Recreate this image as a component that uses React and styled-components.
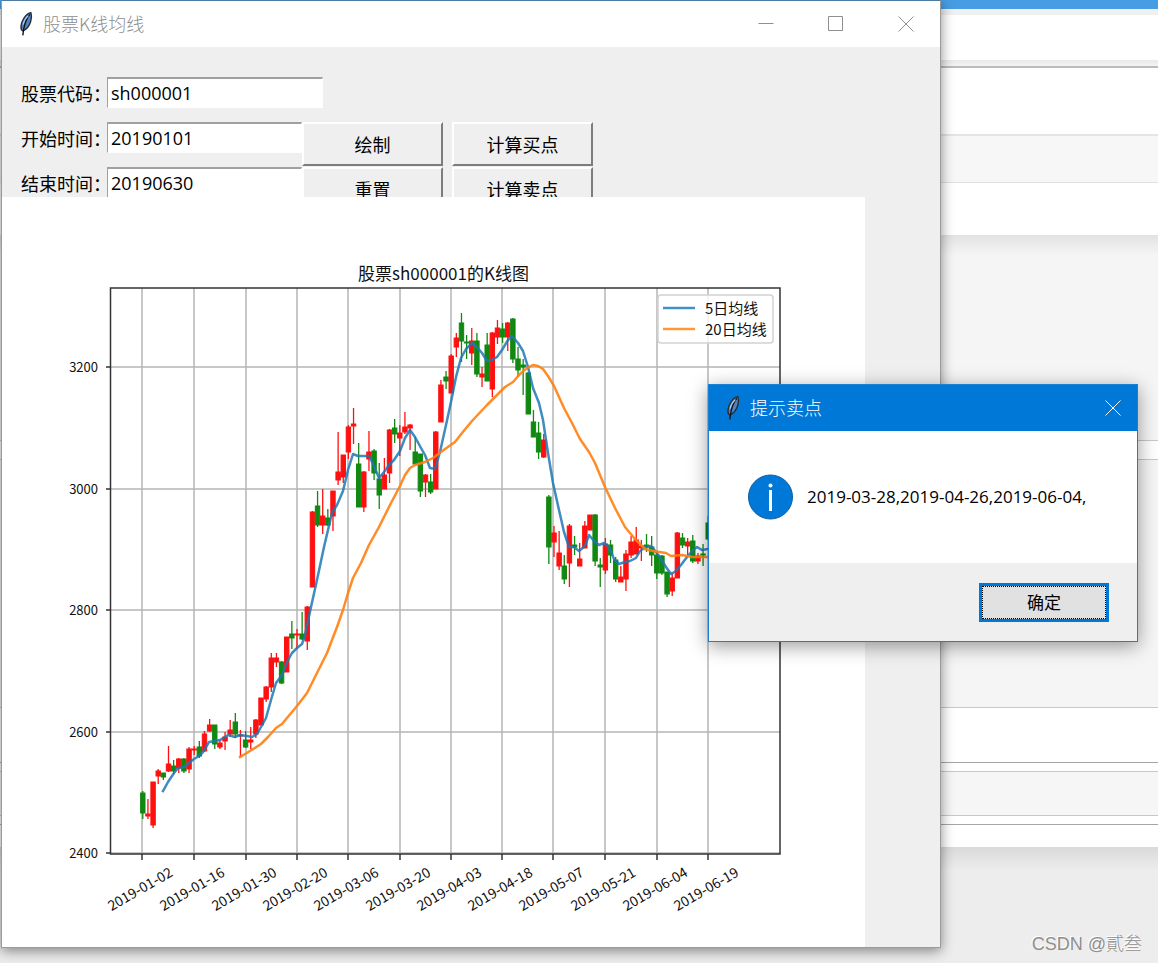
import React from "react";
import styled, { createGlobalStyle } from "styled-components";

const uiFont = `"Open Sans", "Noto Sans CJK SC", sans-serif`;
const cjkFont = `"Noto Sans CJK SC", sans-serif`;

const GlobalStyle = createGlobalStyle`
  *, *::before, *::after { box-sizing: border-box; }
  body { margin: 0; font-family: ${uiFont}; color: #000; background: #ededed; }
  button, input { font: inherit; color: inherit; }
`;

/* ---------- desktop ---------- */

const Desktop = styled.main`
  position: relative;
  display: grid;
  grid-template-columns: minmax(0, 1fr);
  min-height: 100vh;
  overflow: hidden;
`;

const Backdrop = styled.div`
  grid-area: 1 / 1;
  display: flex;
  flex-direction: column;
`;

const Band = styled.div`
  flex: ${(p) => (p.$fill ? "1 0 0" : "none")};
  height: ${(p) => p.$h}px;
  background: ${(p) => p.$bg};
`;

const Watermark = styled.p`
  position: absolute;
  right: 16px;
  bottom: 5px;
  margin: 0;
  font-family: "Liberation Sans", "Noto Sans CJK SC", sans-serif;
  font-weight: 300;
  font-size: 18px;
  line-height: 28px;
  color: #8e8e8e;
  text-shadow: -1px -1px 0 #fff;
`;

/* ---------- window chrome ---------- */

const MainWindow = styled.section`
  grid-area: 1 / 1;
  align-self: start;
  margin: 0 217px 15px 1px;
  border: 1px solid #9b9b9b;
  border-top-color: #4b7aa5;
  background: #efefef;
  box-shadow: 0 3px 12px rgba(0, 0, 0, 0.45);
`;

const TitleBar = styled.header`
  display: flex;
  align-items: center;
  height: 46px;
  padding: 0 ${(p) => (p.$active ? 12 : 22)}px 0 16px;
  gap: 9px;
  background: ${(p) => (p.$active ? "#0078d7" : "#fff")};
  color: ${(p) => (p.$active ? "#fff" : "#8f8f8f")};
`;

const WindowTitle = styled.h1`
  flex: 1;
  margin: 0;
  padding-bottom: 3px;
  font-family: ${cjkFont};
  font-weight: 300;
  font-size: 18px;
  line-height: 24px;
`;

const CaptionButtons = styled.div`
  display: flex;
  gap: 46px;
`;

const CaptionButton = styled.button`
  display: grid;
  place-items: center;
  width: 24px;
  height: 24px;
  padding: 0;
  border: 0;
  background: none;
`;

/* ---------- query form ---------- */

const QueryForm = styled.form`
  height: 150px;
  padding: 30px 0 0 19px;
  overflow: hidden;
`;

const FormRow = styled.div`
  display: flex;
  align-items: flex-start;
  height: 45px;
`;

const FieldLabel = styled.label`
  width: 86px;
  font-family: ${cjkFont};
  font-size: 18px;
  line-height: 32px;
  white-space: nowrap;
`;

const Field = styled.input`
  width: ${(p) => (p.$wide ? 216 : 195)}px;
  height: 31px;
  padding: 0 3px;
  border: 1px solid #fff;
  border-top: 2px solid #a0a0a0;
  border-left: 1px solid #a0a0a0;
  border-radius: 0;
  background: #fff;
  font-size: 18px;
  line-height: 28px;
  outline: none;
`;

const ToolButton = styled.button`
  width: 141px;
  height: 44px;
  margin-right: 9px;
  padding: 0 0 1px;
  border: 2px solid #fff;
  border-right: 2px solid #7d7d7d;
  border-bottom: 2px solid #7d7d7d;
  background: #efefef;
  font-family: ${cjkFont};
  font-size: 18px;
  line-height: 24px;
`;

const Figure = styled.figure`
  margin: 0 75px 0 0;
  background: #fff;

  svg { display: block; width: 100%; height: auto; }
`;

/* ---------- message dialog ---------- */

const Dialog = styled.section`
  position: absolute;
  top: 384px;
  right: 20px;
  width: 430px;
  border: 1px solid #1b80d2;
  background: #efefef;
  box-shadow: 0 4px 18px rgba(0, 0, 0, 0.4);
`;

const Message = styled.div`
  display: flex;
  align-items: center;
  gap: 13px;
  height: 132px;
  padding: 0 39px;
  background: #fff;
  font-size: 17px;
  line-height: 24px;

  p { margin: 0; white-space: nowrap; }
`;

const DialogFooter = styled.footer`
  display: flex;
  justify-content: flex-end;
  align-items: center;
  height: 78px;
  padding: 0 28px;
`;

const OkButton = styled.button`
  width: 130px;
  height: 39px;
  padding: 0;
  border: 3px solid #0078d7;
  background: #e1e1e1;
  font-family: ${cjkFont};
  font-size: 17px;
  line-height: 24px;
  outline: 1px dotted #000;
  outline-offset: -4px;
`;

/* ---------- icons ---------- */

const Feather = () => (
  <svg width="16" height="26" viewBox="0 0 16 26" aria-hidden="true">
    <path d="M12.800 1.600C9.600 2.200 6 6 4 11c-1.200 3.200-1.400 5.800-.6 7.800l1.600 1.200c3.400-1.600 6.400-5 7.600-9.200 1-3.600 1.200-6.600.2-9.200z" fill="#4f83c4" stroke="#2b2b2b" strokeWidth="1.300" />
    <path d="M11.800 3.400C8.400 7.200 6 12.600 4.800 24.400" fill="none" stroke="#111" strokeWidth="1.400" />
    <path d="M10.400 4.600C7.800 6.800 6 10 5 13.600" fill="none" stroke="#a9cdf3" strokeWidth="1.200" />
  </svg>
);

const CaptionIcon = ({ d }) => (
  <svg width="16" height="16" viewBox="0 0 16 16" aria-hidden="true">
    <path d={d} fill="none" stroke="currentColor" strokeWidth="1" />
  </svg>
);

const MINIMIZE = "M0.500 7.500H15.500";
const MAXIMIZE = "M0.500 0.500H14.500V14.500H0.500Z";
const CLOSE = "M0.500 0.500L15.500 15.500M15.500 0.500L0.500 15.500";

const InfoIcon = () => (
  <svg width="46" height="46" viewBox="0 0 46 46" aria-hidden="true">
    <circle cx="22.500" cy="23" r="22" fill="#0078d7" stroke="#0d5fa5" strokeWidth="1" />
    <circle cx="22.500" cy="11.500" r="2" fill="#fff" />
    <path d="M22.500 16V37" stroke="#fff" strokeWidth="3" />
  </svg>
);

/* ---------- chart ---------- */

// Each candle: direction, body top, body bottom, wick top, wick bottom.
const CANDLES = [
  ["g", 793, 813, 791, 819], ["r", 814, 816, 799, 819], ["r", 782, 825, 782, 828],
  ["r", 771, 776, 769, 784], ["g", 773, 777, 773, 780], ["r", 764, 771, 746, 772],
  ["g", 766, 771, 760, 774], ["r", 759, 768, 758, 773], ["g", 759, 771, 758, 773],
  ["r", 749, 769, 747, 773], ["r", 749, 750, 746, 755], ["g", 747, 756, 741, 758],
  ["r", 734, 751, 731, 752], ["r", 725, 731, 719, 732], ["g", 725, 744, 725, 749],
  ["r", 743, 747, 740, 749], ["r", 737, 741, 732, 750], ["r", 730, 734, 720, 737],
  ["g", 722, 734, 713, 738], ["r", 735, 736, 730, 757], ["g", 740, 747, 731, 748],
  ["r", 740, 742, 727, 749], ["r", 720, 734, 719, 738], ["r", 698, 725, 698, 725],
  ["r", 687, 699, 686, 702], ["r", 658, 687, 653, 692], ["r", 658, 662, 653, 667],
  ["g", 662, 683, 661, 684], ["r", 637, 672, 637, 672], ["g", 634, 638, 621, 649],
  ["r", 634, 635, 629, 649], ["g", 634, 639, 612, 640], ["r", 607, 641, 606, 650],
  ["r", 512, 587, 511, 587], ["g", 506, 525, 491, 527], ["r", 516, 525, 489, 534],
  ["g", 518, 525, 509, 526], ["r", 491, 516, 491, 531], ["r", 472, 480, 432, 485],
  ["r", 455, 477, 455, 483], ["r", 427, 452, 425, 459], ["r", 424, 426, 408, 444],
  ["g", 464, 507, 443, 507], ["r", 472, 507, 471, 512], ["r", 452, 459, 431, 471],
  ["g", 451, 473, 449, 480], ["g", 479, 495, 463, 509], ["r", 475, 489, 458, 489],
  ["r", 430, 473, 429, 483], ["g", 428, 434, 419, 443], ["r", 433, 438, 425, 456],
  ["r", 427, 432, 412, 434], ["r", 425, 428, 424, 450], ["g", 452, 464, 437, 464],
  ["g", 454, 491, 454, 497], ["r", 475, 482, 474, 497], ["g", 482, 492, 474, 494],
  ["r", 432, 489, 431, 489], ["r", 385, 422, 380, 422], ["g", 377, 381, 371, 389],
  ["r", 356, 393, 354, 393], ["r", 338, 347, 333, 357], ["g", 323, 341, 313, 362],
  ["g", 342, 343, 335, 359], ["r", 341, 353, 328, 365], ["g", 341, 374, 333, 377],
  ["r", 374, 377, 367, 387], ["g", 345, 381, 333, 381], ["r", 333, 389, 332, 397],
  ["r", 328, 337, 320, 344], ["g", 329, 337, 323, 343], ["r", 323, 337, 322, 351],
  ["g", 319, 359, 318, 363], ["g", 359, 370, 347, 377], ["g", 365, 367, 359, 395],
  ["g", 373, 414, 372, 414], ["g", 422, 437, 410, 437], ["g", 433, 452, 422, 459],
  ["r", 440, 457, 434, 458], ["g", 497, 547, 495, 564], ["r", 533, 542, 526, 557],
  ["r", 553, 566, 531, 570], ["g", 566, 579, 555, 584], ["r", 526, 563, 524, 587],
  ["g", 545, 547, 536, 555], ["r", 559, 566, 543, 566], ["r", 526, 548, 521, 548],
  ["r", 515, 530, 515, 530], ["g", 515, 561, 514, 566], ["g", 565, 567, 558, 587],
  ["r", 544, 570, 538, 574], ["g", 545, 555, 540, 563], ["g", 560, 579, 557, 582],
  ["r", 577, 582, 566, 582], ["r", 554, 579, 550, 591], ["r", 542, 555, 536, 558],
  ["r", 540, 554, 527, 554], ["r", 546, 548, 540, 561], ["g", 545, 547, 534, 552],
  ["g", 547, 555, 536, 566], ["g", 555, 573, 552, 579], ["g", 556, 573, 555, 575],
  ["g", 572, 594, 572, 597], ["r", 578, 591, 573, 596], ["r", 533, 578, 532, 578],
  ["g", 538, 545, 533, 548], ["r", 542, 546, 538, 555], ["g", 541, 561, 535, 563],
  ["r", 556, 561, 553, 564], ["g", 554, 555, 544, 566], ["g", 523, 539, 516, 540],
];

const MA5 =
  "163,791 168,782 174,773 178,768 184,767 189,763 194,759 199,756 203,752 209,742 215,741 220,740 228,735 235,737 240,735 247,736 252,737 257,734 261,727 266,718 271,700 276,683 282,675 287,662 292,653 297,648 302,644 305,635 311,607 317,580 324,547 332,513 337,505 343,491 348,470 353,454 358,456 364,456 369,456 374,466 379,478 384,472 389,465 394,460 400,451 405,438 410,430 415,437 421,448 425,455 430,468 435,469 440,452 446,425 451,402 456,377 461,358 466,349 472,343 477,347 482,353 487,361 492,360 497,357 502,350 508,340 512,336 518,343 523,351 528,367 533,388 539,403 543,420 548,453 553,483 559,510 564,532 569,547 574,547 579,551 585,546 589,535 594,541 599,545 604,543 609,547 614,559 619,564 625,562 630,561 636,558 640,551 646,547 651,546 656,552 661,559 666,567 671,574 676,571 681,565 687,557 693,550 697,547 702,550 708,549";

const MA20 =
  "240,757 250,751 261,744 268,737 276,728 282,724 287,718 297,706 307,693 317,673 327,653 337,627 343,610 348,593 353,578 361,563 369,545 379,527 390,505 400,486 405,475 410,468 415,465 425,462 433,458 445,449 455,442 462,433 472,421 487,405 505,387 513,382 520,374 527,368 533,365 538,366 543,369 548,376 554,386 564,408 572,423 580,439 589,452 595,463 605,487 615,508 625,527 635,539 645,549 653,551 666,553 671,556 682,555 687,556 692,557 708,557";

const Y_TICKS = [[3200, 367], [3000, 489], [2800, 610], [2600, 732], [2400, 853]];
const X_TICKS = [
  ["2019-01-02", 142], ["2019-01-16", 194], ["2019-01-30", 246], ["2019-02-20", 297],
  ["2019-03-06", 348], ["2019-03-20", 400], ["2019-04-03", 451], ["2019-04-18", 502],
  ["2019-05-07", 553], ["2019-05-21", 605], ["2019-06-04", 657], ["2019-06-19", 708],
];
const COLORS = { r: "#ff1010", g: "#118811" };

const Chart = () => (
  <svg viewBox="2 197 863 750" role="img" aria-label="股票sh000001的K线图" fontFamily='"Noto Sans CJK SC", sans-serif' fill="#111">
    <g stroke="#b4b4b4" strokeWidth="1.500">
      {Y_TICKS.map(([v, y]) => <line key={v} x1="111" x2="780" y1={y} y2={y} />)}
      {X_TICKS.map(([d, x]) => <line key={d} x1={x} x2={x} y1="288" y2="854" />)}
    </g>
    {CANDLES.map(([dir, top, bottom, high, low], i) => {
      const x = 142.8 + i * 5.14;
      return (
        <g key={i} fill={COLORS[dir]} stroke={COLORS[dir]}>
          <line x1={x} x2={x} y1={high} y2={low} strokeWidth="1.300" />
          <rect x={x - 2.2} y={top} width="4.400" height={bottom - top} strokeWidth="1" />
        </g>
      );
    })}
    <g fill="none" strokeWidth="2.500" strokeLinejoin="round" strokeLinecap="square">
      <polyline points={MA5} stroke="#1f77b4" strokeOpacity="0.850" />
      <polyline points={MA20} stroke="#ff7f0e" strokeOpacity="0.900" />
    </g>
    <g stroke="#333" strokeWidth="1.500" fill="none">
      <rect x="110.500" y="288" width="669.500" height="566" />
      {Y_TICKS.map(([v, y]) => <line key={v} x1="106" x2="110" y1={y} y2={y} />)}
      {X_TICKS.map(([d, x]) => <line key={d} x1={x} x2={x} y1="854" y2="860" />)}
    </g>
    <text x="443.500" y="280" textAnchor="middle" fontSize="17">股票sh000001的K线图</text>
    <g fontSize="13" textAnchor="end">
      {Y_TICKS.map(([v, y]) => <text key={v} x="98" y={y + 5}>{v}</text>)}
    </g>
    <g fontSize="14" textAnchor="middle">
      {X_TICKS.map(([d, x]) => (
        <text key={d} y="5" transform={`translate(${x - 2} 889) rotate(-30)`}>{d}</text>
      ))}
    </g>
    <rect x="658" y="295" width="115" height="48" rx="3" fill="#fff" fillOpacity="0.800" stroke="#d2d2d2" strokeWidth="1.500" />
    <g strokeWidth="2.500">
      <line x1="663" x2="695" y1="308" y2="308" stroke="#4390c4" />
      <line x1="663" x2="695" y1="329" y2="329" stroke="#ff9838" />
    </g>
    <g fontSize="15">
      <text x="705" y="314">5日均线</text>
      <text x="705" y="335">20日均线</text>
    </g>
  </svg>
);

/* ---------- page ---------- */

const BANDS = [
  [9, "#479de3"], [6, "#f0f0f0"], [45, "#fff"], [6, "linear-gradient(#e8e8e8, #f4f4f4)"],
  [2, "#bbb"], [66, "#fff"], [2, "#e4e4e4"], [46, "#f7f7f7"], [1, "#e0e0e0"], [52, "#fff"],
  [20, "linear-gradient(#e2e2e2, #f5f5f5)"], [185, "#f5f5f5"], [1, "#c8c8c8"], [18, "#fff"],
  [1, "#c8c8c8"], [247, "#f5f5f5"], [1, "#c8c8c8"], [54, "#fff"], [1, "#a6a6a6"], [8, "#fff"],
  [1, "#c8c8c8"], [43, "#f6f6f6"], [1, "#c8c8c8"], [8, "#fff"], [1, "#a6a6a6"], [22, "#fff"],
  [24, "linear-gradient(#dadada, #ededed)"],
];

const FIELDS = [
  { id: "code", label: "股票代码：", value: "sh000001", wide: true, actions: [] },
  { id: "start", label: "开始时间：", value: "20190101", actions: ["绘制", "计算买点"] },
  { id: "end", label: "结束时间：", value: "20190630", actions: ["重置", "计算卖点"] },
];

export default function App() {
  return (
    <Desktop>
      <GlobalStyle />
      <Backdrop aria-hidden="true">
        {BANDS.map(([h, bg], i) => <Band key={i} $h={h} $bg={bg} />)}
        <Band $fill $bg="#ededed" />
      </Backdrop>

      <MainWindow>
        <TitleBar>
          <Feather />
          <WindowTitle>股票K线均线</WindowTitle>
          <CaptionButtons>
            <CaptionButton type="button" aria-label="最小化"><CaptionIcon d={MINIMIZE} /></CaptionButton>
            <CaptionButton type="button" aria-label="最大化"><CaptionIcon d={MAXIMIZE} /></CaptionButton>
            <CaptionButton type="button" aria-label="关闭"><CaptionIcon d={CLOSE} /></CaptionButton>
          </CaptionButtons>
        </TitleBar>
        <QueryForm onSubmit={(e) => e.preventDefault()}>
          {FIELDS.map((f) => (
            <FormRow key={f.id}>
              <FieldLabel htmlFor={f.id}>{f.label}</FieldLabel>
              <Field id={f.id} type="text" defaultValue={f.value} $wide={f.wide} />
              {f.actions.map((a) => <ToolButton key={a} type="button">{a}</ToolButton>)}
            </FormRow>
          ))}
        </QueryForm>
        <Figure><Chart /></Figure>
      </MainWindow>

      <Dialog role="dialog" aria-label="提示卖点">
        <TitleBar $active>
          <Feather />
          <WindowTitle as="h2">提示卖点</WindowTitle>
          <CaptionButton type="button" aria-label="关闭"><CaptionIcon d={CLOSE} /></CaptionButton>
        </TitleBar>
        <Message>
          <InfoIcon />
          <p>2019-03-28,2019-04-26,2019-06-04,</p>
        </Message>
        <DialogFooter>
          <OkButton type="button">确定</OkButton>
        </DialogFooter>
      </Dialog>

      <Watermark>CSDN @貳叁</Watermark>
    </Desktop>
  );
}
